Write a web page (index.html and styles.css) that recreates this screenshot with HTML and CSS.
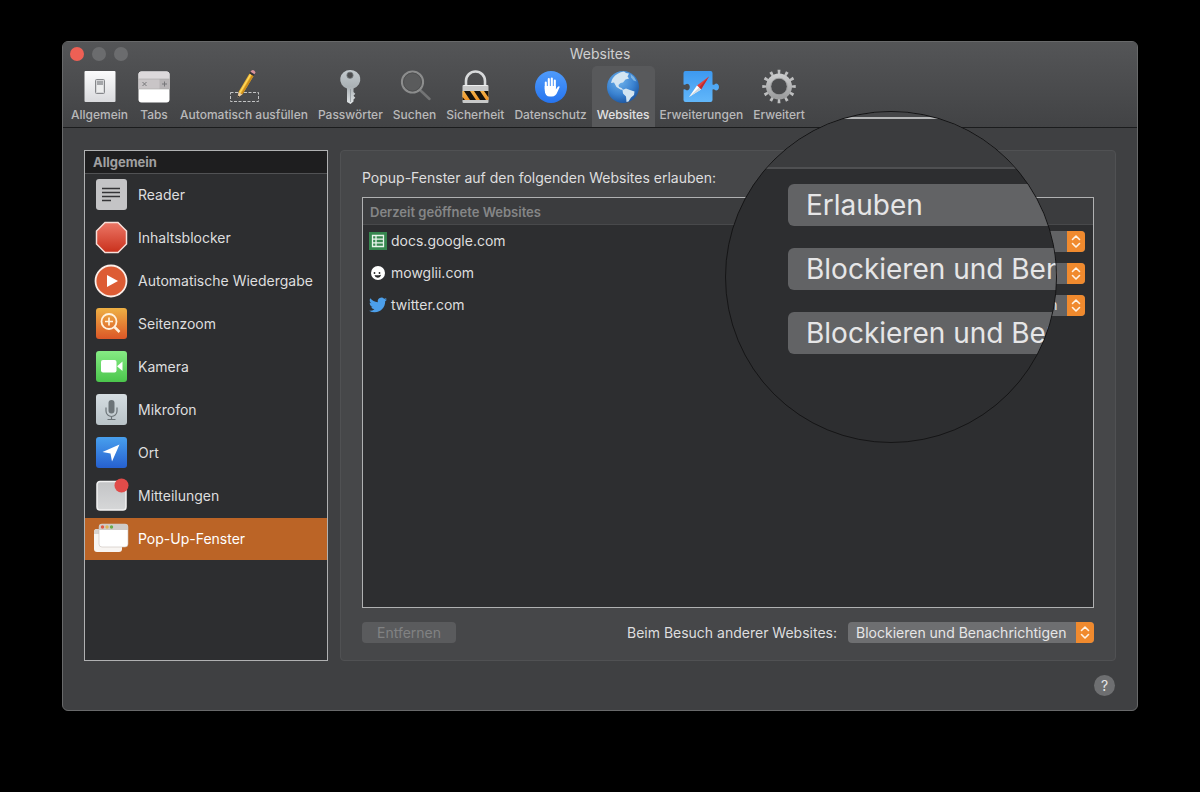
FILE: index.html
```html
<!DOCTYPE html>
<html lang="de">
<head>
    <meta charset="UTF-8">
    <meta name="viewport" content="width=device-width, initial-scale=1.0">
    <title>Websites</title>
    <link rel="stylesheet" href="styles.css">
</head>
<body>
    <div class="window">
        <header class="toolbar">
            <div class="titlebar">
                <div class="lights">
                    <button class="light close" aria-label="Schließen"></button>
                    <button class="light" aria-label="Minimieren"></button>
                    <button class="light" aria-label="Zoomen"></button>
                </div>
                <h1>Websites</h1>
            </div>
            <nav class="tabs">
                <button class="tab">
                    <svg viewBox="0 0 36 36">
                        <defs><linearGradient id="plate" x2="0" y2="1"><stop stop-color="#fbfbfc"/><stop offset="1" stop-color="#d9dadd"/></linearGradient></defs>
                        <rect x="2.500" y="3" width="31" height="31" rx="1" fill="url(#plate)"/>
                        <rect x="13.500" y="11.500" width="9" height="14" rx="1" fill="#d5d6d8" stroke="#85878a"/>
                        <rect x="15" y="13" width="6" height="4" fill="#a4a6a9"/>
                        <rect x="15" y="17" width="6" height="7" fill="#eceded"/>
                    </svg>
                    <span>Allgemein</span>
                </button>
                <button class="tab">
                    <svg viewBox="0 0 36 36">
                        <rect x="2.500" y="3.500" width="31" height="31" rx="3" fill="#fff"/>
                        <path d="M2.500 11V6.500q0-3 3-3h25q3 0 3 3V11z" fill="#dcd9db"/>
                        <path d="M2.500 11h31v10h-31z" fill="#c9c5c7"/>
                        <path d="M23.500 11h10v10h-10z" fill="#b7b4b6"/>
                        <path d="M6.500 14l4 4M10.500 14l-4 4M26 16h5M28.500 13.500v5" stroke="#77777a" fill="none"/>
                        <path d="M2.500 11h31M2.500 21h31" stroke="#aaa7a9" stroke-width=".6"/>
                    </svg>
                    <span>Tabs</span>
                </button>
                <button class="tab">
                    <svg viewBox="0 0 36 36">
                        <rect x="4.500" y="24.500" width="28" height="9" fill="none" stroke="#c3c4c5" stroke-dasharray="3 1.500"/>
                        <path d="M11.500 30l1-6 4 2.300z" fill="#f0cfa0"/>
                        <path d="M11.500 30l.4-2.500 1.500 1z" fill="#222"/>
                        <path d="M12.500 24L23.500 5.500l4 2.500-11 18.300z" fill="#f0b733"/>
                        <path d="M15 25.500L26 7l1.500 1-11 18.300z" fill="#c98b1c"/>
                        <path d="M13.300 24.500L24.300 6l1 .6-11 18.500z" fill="#ffdc62"/>
                        <path d="M23.500 5.500l1-1.700 4 2.400-1 1.800z" fill="#37323a"/>
                        <path d="M24.500 3.800q1.500-2.500 3.600-1.300 2.200 1.500.4 3.700z" fill="#d9929c"/>
                    </svg>
                    <span>Automatisch ausfüllen</span>
                </button>
                <button class="tab">
                    <svg viewBox="0 0 36 36">
                        <defs><linearGradient id="key" x2="0" y2="1"><stop stop-color="#c3cace"/><stop offset=".5" stop-color="#aab1b5"/><stop offset="1" stop-color="#e1e5e7"/></linearGradient></defs>
                        <path fill-rule="evenodd" fill="url(#key)" d="M18 2a10 9.500 0 0 1 3.500 18.500v3.500l1.800 1.800-1.800 2 1.800 2-1.800 1.800v2L18.500 36 15 34V20.500A10 9.500 0 0 1 18 2zM18 4.300a3 3 0 1 0 0 6 3 3 0 0 0 0-6z"/>
                        <path d="M18.500 21v13" stroke="#8e969a" stroke-width=".8"/>
                        <circle cx="18" cy="7.300" r="3.200" fill="none" stroke="#6d7376" stroke-width=".8"/>
                    </svg>
                    <span>Passwörter</span>
                </button>
                <button class="tab">
                    <svg viewBox="0 0 36 36">
                        <path d="M23.500 22.500l9 8.500" stroke="#737475" stroke-width="2.500" stroke-linecap="round"/>
                        <circle cx="15.500" cy="14" r="10.500" fill="#5a5b5c" stroke="#8c8d8d" stroke-width="2.200"/>
                        <circle cx="15.500" cy="14" r="9" fill="none" stroke="#4f5051"/>
                    </svg>
                    <span>Suchen</span>
                </button>
                <button class="tab">
                    <svg viewBox="0 0 36 36">
                        <defs><linearGradient id="hazard" x2="0" y2="1"><stop stop-color="#f5b34c"/><stop offset="1" stop-color="#ee9428"/></linearGradient></defs>
                        <path d="M9 18v-5a9.500 9.500 0 0 1 19 0v5" fill="none" stroke="#d8dadb" stroke-width="2.600"/>
                        <rect x="5.500" y="17" width="26" height="18" rx="1" fill="#c8c9c9"/>
                        <path d="M5.500 23h26v9h-26z" fill="url(#hazard)"/>
                        <path d="M7 23h6l6 9h-6zM17 23h6l6 9h-6zM27 23h4.500v6.500zM5.500 29l2.500 3H5.500z" fill="#17130e"/>
                        <path d="M6.500 17.500h24" stroke="#eeefef"/>
                    </svg>
                    <span>Sicherheit</span>
                </button>
                <button class="tab">
                    <svg viewBox="0 0 36 36">
                        <defs><linearGradient id="privacy" x2="0" y2="1"><stop stop-color="#4f9bfb"/><stop offset="1" stop-color="#2674ef"/></linearGradient></defs>
                        <circle cx="18" cy="19" r="16" fill="url(#privacy)"/>
                        <path d="M12.800 21v-6.500M15.800 20v-9M18.800 20v-9.500M21.800 20v-7.500" stroke="#fff" stroke-width="2.100" stroke-linecap="round"/>
                        <path d="M11.750 18h11.100v3.500l1.800-2.500q1.200-1.200 2.100-.2-.9 2.200-2.200 5-1.700 4.700-5.600 4.700h-2q-5 0-5.200-6z" fill="#fff"/>
                    </svg>
                    <span>Datenschutz</span>
                </button>
                <button class="tab active">
                    <svg viewBox="0 0 36 36">
                        <defs><radialGradient id="globe" cx=".4" cy=".3" r=".75"><stop stop-color="#6fb3ec"/><stop offset=".6" stop-color="#3a82d0"/><stop offset="1" stop-color="#1b539d"/></radialGradient></defs>
                        <circle cx="18" cy="19" r="16" fill="url(#globe)"/>
                        <path d="M8 10q4-5.500 11-6.500l2 1.500 3 .5-1.500 3 1.500 2-3.500 1-2.500 3-2.500.5-2 2 .5 2 2.500 1 2 2-3-.5-4-2.500-2.500-4.500-3 .5q.5-3 2-5z" fill="#d3e5f2"/>
                        <path d="M17.500 22l3.500-1.500 4 1.500 4.500 1.500-.5 3.500-3 2.500-2.500 4-2 .5-.5-5.500-3-3z" fill="#d3e5f2"/>
                        <path d="M25.500 6l3.500 3 2.500 4.500-3-1-2.500-3z" fill="#7db4e2"/>
                    </svg>
                    <span>Websites</span>
                </button>
                <button class="tab">
                    <svg viewBox="0 0 36 36">
                        <defs><linearGradient id="puzzle" x2="0" y2="1"><stop stop-color="#3d99f0"/><stop offset="1" stop-color="#62b7fa"/></linearGradient></defs>
                        <path d="M2.500 3h25q2 0 2 2v11.500q1.500.7 2.200-.3 1.300-1.200 2.900-.2 1.400 1 1.400 3t-1.400 3q-1.600 1-2.900-.2-.7-1-2.200-.3V32q0 2-2 2h-25q-2 0-2-2V21.500q1.500-.7 2.200.3 1.300 1 2.900 0 1.200-1 1.200-2.800t-1.200-2.800q-1.600-1-2.900 0-.7 1-2.200.3V5q0-2 2-2z" fill="url(#puzzle)"/>
                        <path d="M26 8.500L14 17.500l4 4z" fill="#e5403c"/>
                        <path d="M26 8.500L16 19.500l2 2z" fill="#b92c32"/>
                        <path d="M6 29l8-11.500 4 4z" fill="#fff"/>
                        <path d="M6 29l10-9.500 2 2z" fill="#cfd8df"/>
                    </svg>
                    <span>Erweiterungen</span>
                </button>
                <button class="tab">
                    <svg viewBox="0 0 36 36">
                        <defs><linearGradient id="gear" x2="0" y2="1"><stop stop-color="#c9cacb"/><stop offset="1" stop-color="#9d9e9f"/></linearGradient></defs>
                        <circle cx="18" cy="18.500" r="14.500" fill="none" stroke="#bdbebf" stroke-width="4.500" pathLength="48" stroke-dasharray="1.400 2.600" stroke-dashoffset=".7"/>
                        <circle cx="18" cy="18.500" r="10.500" fill="none" stroke="url(#gear)" stroke-width="5"/>
                        <circle cx="18" cy="18.500" r="8.300" fill="none" stroke="#98999a" stroke-width=".8"/>
                    </svg>
                    <span>Erweitert</span>
                </button>
            </nav>
        </header>

        <main class="content">
            <aside class="sidebar">
                <h2>Allgemein</h2>
                <ul>
                    <li><a href="#">
                        <svg viewBox="0 0 36 36">
                            <rect x="3" y="2" width="31" height="31" rx="3" fill="#c4c4c6"/>
                            <path d="M9 11.500h18M9 15.500h18M9 19.500h18M9 23.500h9" stroke="#343437" stroke-width="1.500"/>
                        </svg>
                        Reader
                    </a></li>
                    <li><a href="#">
                        <svg viewBox="0 0 36 36">
                            <defs><linearGradient id="stop" x2="0" y2="1"><stop stop-color="#ec7767"/><stop offset="1" stop-color="#c9301b"/></linearGradient></defs>
                            <path d="M12 2.500h13l8.500 8.500v13l-8.500 8.500H12L3.500 24V11z" fill="url(#stop)" stroke="#f7dfd9" stroke-width="1.500"/>
                        </svg>
                        Inhaltsblocker
                    </a></li>
                    <li><a href="#">
                        <svg viewBox="0 0 36 36">
                            <circle cx="18" cy="18" r="15.500" fill="#dd5c34" stroke="#fbeee8" stroke-width="1.800"/>
                            <path d="M14 12l11 6-11 6z" fill="#fff"/>
                        </svg>
                        Automatische Wiedergabe
                    </a></li>
                    <li><a href="#">
                        <svg viewBox="0 0 36 36">
                            <defs><linearGradient id="zoom" x2="0" y2="1"><stop stop-color="#eeb044"/><stop offset="1" stop-color="#db5727"/></linearGradient></defs>
                            <rect x="3" y="2" width="31" height="31" rx="3" fill="url(#zoom)"/>
                            <circle cx="16" cy="15.500" r="7.500" fill="none" stroke="#fff2df" stroke-width="1.800"/>
                            <path d="M16 11.500v8M12 15.500h8" stroke="#fff2df" stroke-width="1.700"/>
                            <path d="M21.500 21l5 5" stroke="#fff2df" stroke-width="2.500"/>
                        </svg>
                        Seitenzoom
                    </a></li>
                    <li><a href="#">
                        <svg viewBox="0 0 36 36">
                            <defs><linearGradient id="cam" x2="0" y2="1"><stop stop-color="#86eb84"/><stop offset="1" stop-color="#4bc64c"/></linearGradient></defs>
                            <rect x="3" y="2" width="31" height="31" rx="3" fill="url(#cam)"/>
                            <rect x="8" y="11" width="15.500" height="12.500" rx="2" fill="#fff"/>
                            <path d="M24 17.300l5.500-4.800v9.500z" fill="#fff"/>
                        </svg>
                        Kamera
                    </a></li>
                    <li><a href="#">
                        <svg viewBox="0 0 36 36">
                            <defs><linearGradient id="mic" x2="0" y2="1"><stop stop-color="#d5dde1"/><stop offset="1" stop-color="#b9c3c8"/></linearGradient></defs>
                            <rect x="3" y="2" width="31" height="31" rx="3" fill="url(#mic)"/>
                            <rect x="15.500" y="8" width="6" height="13.500" rx="3" fill="#6c7478"/>
                            <path d="M13 15.500v3.500a5.500 5.500 0 0 0 11 0v-3.500M18.500 24.500v3M14.500 27.500h8" fill="none" stroke="#6c7478" stroke-width="1.200"/>
                        </svg>
                        Mikrofon
                    </a></li>
                    <li><a href="#">
                        <svg viewBox="0 0 36 36">
                            <defs><linearGradient id="loc" x2="0" y2="1"><stop stop-color="#48a0ee"/><stop offset="1" stop-color="#2660cf"/></linearGradient></defs>
                            <rect x="3" y="2" width="31" height="31" rx="3" fill="url(#loc)"/>
                            <path d="M26.500 9.500L19 26.500l-1.500-8-8-1.500z" fill="#fff"/>
                        </svg>
                        Ort
                    </a></li>
                    <li><a href="#">
                        <svg viewBox="0 0 36 36">
                            <defs><linearGradient id="note" x2="0" y2="1"><stop stop-color="#c3c4c6"/><stop offset="1" stop-color="#d6d7d8"/></linearGradient></defs>
                            <rect x="4" y="3.500" width="29" height="28.500" rx="3" fill="url(#note)" stroke="#f2f2f2" stroke-width="1.500"/>
                            <circle cx="28.500" cy="7.500" r="7" fill="#e14b49"/>
                        </svg>
                        Mitteilungen
                    </a></li>
                    <li><a href="#" class="selected">
                        <svg viewBox="0 0 36 36">
                            <rect x="1" y="8" width="28" height="23" rx="3" fill="#f8f5f2"/>
                            <path d="M1 13v-2q0-3 3-3h3v5z" fill="#d8d3cf"/>
                            <rect x="6" y="3" width="29" height="23" rx="3" fill="#fff" stroke="#c9c1bb" stroke-width=".6"/>
                            <path d="M6 9V6q0-3 3-3h23q3 0 3 3v3z" fill="#cfccca"/>
                            <circle cx="9.500" cy="6" r="1.700" fill="#df5b48"/><circle cx="14" cy="6" r="1.700" fill="#dfb557"/><circle cx="18.500" cy="6" r="1.700" fill="#69ac4d"/>
                        </svg>
                        Pop-Up-Fenster
                    </a></li>
                </ul>
            </aside>

            <section class="panel">
                <p class="intro">Popup-Fenster auf den folgenden Websites erlauben:</p>
                <div class="sites">
                    <table>
                        <thead>
                            <tr><th colspan="2">Derzeit geöffnete Websites</th></tr>
                        </thead>
                        <tbody>
                            <tr>
                                <td>
                                    <div class="site">
                                        <svg viewBox="0 0 18 18"><path d="M0 0h18v18H0z" fill="#36874f"/><path d="M3.500 3.500h11v11h-11zM3.500 7.200h11M3.500 10.800h11M7 3.500v11" fill="none" stroke="#e9f5ec" stroke-width="1.300"/></svg>
                                        <label for="docs">docs.google.com</label>
                                    </div>
                                </td>
                                <td>
                                    <span class="popup">
                                        <select id="docs"><option>Erlauben</option><option>Blockieren</option></select>
                                        <svg viewBox="0 0 18 21"><path d="M5.500 8.500L9 5l3.500 3.500M5.500 12.500L9 16l3.500-3.500"/></svg>
                                    </span>
                                </td>
                            </tr>
                            <tr>
                                <td>
                                    <div class="site">
                                        <svg viewBox="0 0 18 18"><circle cx="9" cy="9" r="7" fill="#fff"/><circle cx="5.500" cy="9" r=".9" fill="#222"/><circle cx="10.500" cy="9" r=".9" fill="#222"/><path d="M5.500 11q3 .8 6.500-.3-.5 3-3.300 3-2.800-.2-3.200-2.700z" fill="#2b2b2d"/></svg>
                                        <label for="mowglii">mowglii.com</label>
                                    </div>
                                </td>
                                <td>
                                    <span class="popup">
                                        <select id="mowglii"><option>Blockieren und Benachrichtigen</option><option>Erlauben</option></select>
                                        <svg viewBox="0 0 18 21"><path d="M5.500 8.500L9 5l3.500 3.500M5.500 12.500L9 16l3.500-3.500"/></svg>
                                    </span>
                                </td>
                            </tr>
                            <tr>
                                <td>
                                    <div class="site">
                                        <svg viewBox="0 0 24 24"><path fill="#4c9fea" d="M23.950 4.570a10 10 0 0 1-2.820.77 4.960 4.960 0 0 0 2.160-2.720c-.95.550-2 .96-3.130 1.180a4.920 4.920 0 0 0-8.380 4.480C7.690 8.100 4.070 6.130 1.640 3.160a4.820 4.820 0 0 0-.67 2.480c0 1.710.87 3.210 2.190 4.100a4.900 4.900 0 0 1-2.230-.62v.06a4.920 4.920 0 0 0 3.950 4.830 5 5 0 0 1-2.210.08 4.940 4.940 0 0 0 4.600 3.420A9.870 9.870 0 0 1 0 19.540a14 14 0 0 0 7.560 2.210c9.050 0 14-7.500 14-13.980 0-.21 0-.42-.02-.63a9.940 9.940 0 0 0 2.410-2.570z"/></svg>
                                        <label for="twitter">twitter.com</label>
                                    </div>
                                </td>
                                <td>
                                    <span class="popup">
                                        <select id="twitter"><option>Blockieren und Benachrichtigen</option><option>Erlauben</option></select>
                                        <svg viewBox="0 0 18 21"><path d="M5.500 8.500L9 5l3.500 3.500M5.500 12.500L9 16l3.500-3.500"/></svg>
                                    </span>
                                </td>
                            </tr>
                        </tbody>
                    </table>
                </div>
                <div class="actions">
                    <button class="remove" disabled>Entfernen</button>
                    <label for="others">Beim Besuch anderer Websites:</label>
                    <span class="popup light-popup">
                        <select id="others"><option>Blockieren und Benachrichtigen</option><option>Erlauben</option></select>
                        <svg viewBox="0 0 18 21"><path d="M5.500 8.500L9 5l3.500 3.500M5.500 12.500L9 16l3.500-3.500"/></svg>
                    </span>
                </div>
            </section>
        </main>

        <footer class="footer">
            <button class="help" aria-label="Hilfe">?</button>
        </footer>

        <!-- magnifying glass over the popup menus -->
        <div class="loupe">
            <div class="loupe-head"></div>
            <div class="loupe-list">
                <select aria-label="docs.google.com"><option>Erlauben</option></select>
                <select aria-label="mowglii.com"><option>Blockieren und Benachrichtigen</option></select>
                <select aria-label="twitter.com"><option>Blockieren und Benachrichtigen</option></select>
            </div>
        </div>
    </div>
</body>
</html>
```
FILE: styles.css
```css
* {
    box-sizing: border-box;
}
body {
    display: flex;
    min-height: 100vh;
    margin: 0;
    padding: 41px 62px 81px;
    background-color: #000;
    color: #dededf;
    font-family: Inter, "Liberation Sans", sans-serif;
    font-size: 14px;
    line-height: 20px;
}
button, select {
    margin: 0;
    padding: 0;
    border: none;
    background: none;
    color: inherit;
    font: inherit;
}
.window {
    position: relative;
    display: flex;
    flex: 1;
    flex-direction: column;
    border: 1px solid #68696a;
    border-radius: 6px;
    background-color: #3f4042;
    overflow: hidden;
}
.toolbar {
    border-bottom: 1px solid #1b1c1d;
    background: linear-gradient(#545557, #424345);
}
.titlebar {
    display: grid;
    grid-template-columns: 1fr auto 1fr;
    align-items: center;
    height: 24px;
    padding: 0 7px;
}
.titlebar h1 {
    margin: 0;
    color: #cfcfd0;
    font-size: 14px;
    font-weight: normal;
}
.lights {
    display: flex;
    gap: 8px;
}
.light {
    width: 14px;
    height: 14px;
    border-radius: 50%;
    background-color: #6b6c6e;
}
.close {
    background-color: #ee6055;
}
.tabs {
    display: flex;
    padding: 0 3px;
}
.tab {
    display: flex;
    flex-direction: column;
    align-items: center;
    padding: 2px 5px 4px;
    border-radius: 5px 5px 0 0;
    color: #b9b9ba;
    font-size: 12px;
    font-weight: 500;
    line-height: 16px;
    white-space: nowrap;
}
.tab svg {
    width: 36px;
    height: 36px;
    margin: 0 -2px 3px;
}
.tab.active {
    background-color: #58595b;
    color: #e2e2e3;
}
.content {
    display: flex;
    flex: 1;
    gap: 12px;
    padding: 22px 21px 0;
}
.sidebar {
    width: 244px;
    border: 1px solid #b0b1b2;
    background-color: #2d2e30;
}
.sidebar h2 {
    margin: 0;
    padding: 0 8px;
    border-bottom: 1px solid #515254;
    background-color: #1e1e1f;
    color: #a0a0a1;
    font-size: 13px;
    font-weight: bold;
    line-height: 22px;
}
.sidebar ul {
    display: flex;
    flex-direction: column;
    gap: 1px;
    margin: 0;
    padding: 0;
    list-style: none;
}
.sidebar a {
    display: flex;
    align-items: center;
    gap: 9px;
    height: 42px;
    padding: 0 8px;
    color: #dededf;
    text-decoration: none;
    white-space: nowrap;
}
.sidebar a.selected {
    background-color: #bb6426;
    color: #fff;
}
.sidebar svg {
    width: 36px;
    height: 36px;
}
.panel {
    display: flex;
    flex: 1;
    flex-direction: column;
    padding: 17px 21px;
    border: 1px solid #505153;
    border-radius: 4px;
    background-color: #464749;
}
.intro {
    margin: 0 0 9px;
}
.sites {
    flex: 1;
    border: 1px solid #b0b1b2;
    background-color: #2d2e30;
}
.sites table {
    width: 100%;
    border-collapse: collapse;
}
.sites th {
    height: 26px;
    padding: 2px 7px 0;
    border-bottom: 1px solid #48494b;
    background-color: #3b3c3e;
    color: #858687;
    font-size: 13px;
    font-weight: 600;
    text-align: left;
}
.sites td {
    height: 32px;
    padding: 2px 8px 0 6px;
    line-height: 0;
}
.sites td + td {
    text-align: right;
}
.site {
    display: flex;
    align-items: center;
    gap: 4px;
    line-height: 22px;
}
.site svg {
    width: 18px;
    height: 18px;
}
.popup {
    position: relative;
    display: inline-block;
    width: 246px;
    height: 21px;
    border-radius: 4px;
    background-color: #626365;
    overflow: hidden;
}
.popup select {
    width: 100%;
    height: 21px;
    padding: 0 18px 0 8px;
    color: #e6e6e7;
    line-height: 20px;
    appearance: none;
}
.popup svg {
    position: absolute;
    top: 0;
    right: 0;
    width: 18px;
    height: 21px;
    background-color: #f08a2e;
    pointer-events: none;
}
.popup path {
    fill: none;
    stroke: #fff3e4;
    stroke-width: 1.6;
    stroke-linecap: round;
    stroke-linejoin: round;
}
.light-popup {
    background-color: #6e6f71;
}
.actions {
    display: flex;
    align-items: center;
    margin-top: 14px;
}
.actions label {
    margin-left: auto;
    padding-right: 11px;
}
.remove {
    width: 94px;
    height: 21px;
    border-radius: 4px;
    background-color: #5a5b5d;
    color: #818283;
}
.footer {
    display: flex;
    justify-content: flex-end;
    padding: 14px 22px;
}
.help {
    width: 21px;
    height: 21px;
    border-radius: 50%;
    background-color: #6e6f71;
    color: #e6e6e7;
}
.loupe {
    position: absolute;
    top: 69px;
    right: 80px;
    width: 332px;
    height: 332px;
    border: 1px solid #151516;
    border-radius: 50%;
    background-color: #2d2e30;
    overflow: hidden;
}
.loupe-head {
    height: 57px;
    border-top: 5px solid #464749;
    border-bottom: 2px solid #4f5052;
    background: linear-gradient(#b5b6b7 2px, #3b3c3e 2px);
}
.loupe-list {
    display: flex;
    flex-direction: column;
    gap: 22px;
    padding: 15px 0 0 62px;
}
.loupe-list select {
    width: 492px;
    height: 42px;
    padding: 0 18px;
    border-radius: 6px;
    background-color: #626365;
    color: #e6e6e7;
    font-size: 28px;
    line-height: 40px;
    appearance: none;
}
```
